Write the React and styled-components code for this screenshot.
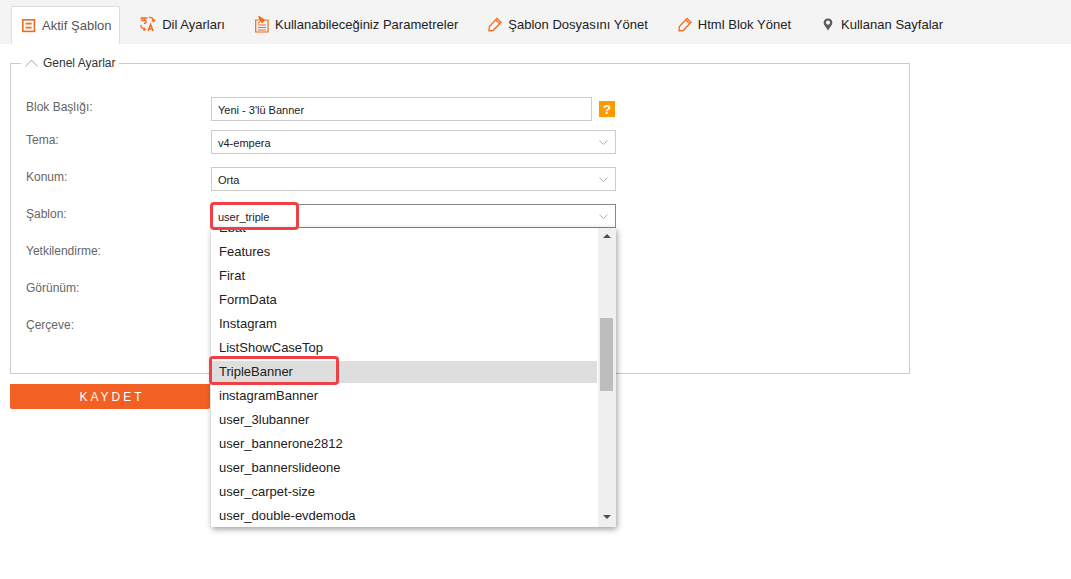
import React from "react";
import styled, { createGlobalStyle } from "styled-components";

const GlobalStyle = createGlobalStyle`
  html, body {
    margin: 0;
    padding: 0;
    background: #fff;
    font-family: "Liberation Sans", Arial, sans-serif;
  }
  * { box-sizing: border-box; }
`;

const Page = styled.div`
  min-height: 579px;
`;

const TabBar = styled.nav`
  display: flex;
  align-items: flex-end;
  height: 44px;
  padding-left: 11px;
  background: #f4f4f4;
`;

const Tab = styled.a`
  display: flex;
  align-items: center;
  gap: 6px;
  height: 38px;
  font-size: 13px;
  letter-spacing: 0.015px;
  white-space: nowrap;
  color: ${(p) => (p.$active ? "#555" : "#222")};
  background: ${(p) => (p.$active ? "#fff" : "transparent")};
  padding: ${(p) => (p.$active ? "0 7.6px 0 10px" : "0 15px 2px")};
  margin-right: ${(p) => (p.$active ? "5px" : "0")};
  border: ${(p) => (p.$active ? "1px solid #ddd" : "1px solid transparent")};
  border-width: ${(p) => (p.$active ? "1px 1px 0 1px" : "0")};
  border-radius: 2px 2px 0 0;
`;

const Fieldset = styled.fieldset`
  width: 900px;
  margin: 12px 0 0 10px;
  padding: 27px 15px 34px;
  border: 1px solid #ccc;
  min-width: 0;
`;

const Legend = styled.legend`
  display: flex;
  align-items: center;
  gap: 5px;
  margin-left: -5px;
  padding: 0 3px 0 4px;
  font-size: 12px;
  line-height: 14px;
  color: #333;
`;

const Row = styled.div`
  display: grid;
  grid-template-columns: 185px 405px;
  margin-bottom: ${(p) => (p.$tight ? "9px" : "13px")};
  &:last-child { margin-bottom: 0; }
`;

const Label = styled.label`
  font-size: 12px;
  line-height: 20px;
  color: #666;
`;

const Control = styled.div`
  position: relative;
  display: flex;
  align-items: center;
  gap: 7px;
`;

const TextInput = styled.input`
  width: 381px;
  height: 24px;
  padding: 1px 6px 0;
  border: 1px solid #ccc;
  font: 11px "Liberation Sans", Arial, sans-serif;
  color: #222;
  outline: none;
`;

const Help = styled.span`
  display: flex;
  align-items: center;
  justify-content: center;
  width: 16px;
  height: 16px;
  background: #ff9900;
  color: #fff;
  font-size: 13px;
  font-weight: bold;
`;

const Select = styled.div`
  display: flex;
  align-items: center;
  justify-content: space-between;
  width: 405px;
  height: 24px;
  padding: 1px 7px 0 6px;
  border: 1px solid ${(p) => (p.$open ? "#888" : "#ccc")};
  font-size: 11px;
  color: #222;
  background: #fff;
`;

const Dropdown = styled.div`
  position: absolute;
  top: 24px;
  left: 0;
  z-index: 2;
  width: 405px;
  height: 299px;
  display: flex;
  justify-content: space-between;
  background: #fff;
  box-shadow: 1px 2px 6px rgba(0, 0, 0, 0.4);
`;

const OptionList = styled.ul`
  width: 386px;
  height: 100%;
  margin: 0;
  padding: 0;
  list-style: none;
  overflow: hidden;
`;

const Option = styled.li`
  height: 22px;
  margin-top: 2px;
  padding-left: 8px;
  font-size: 13px;
  line-height: 21px;
  color: #222;
  background: ${(p) => (p.$selected ? "#dedede" : "transparent")};
  &:first-child { margin-top: -11px; }
`;

const ScrollTrack = styled.div`
  position: relative;
  width: 18px;
  height: 100%;
  background: #f0f0f0;
`;

const ScrollThumb = styled.div`
  position: absolute;
  top: 90px;
  left: 2px;
  width: 13px;
  height: 73px;
  background: #bdbdbd;
`;

const ScrollArrow = styled.span`
  position: absolute;
  left: 5px;
  ${(p) => (p.$down ? "bottom: 8px;" : "top: 6px;")}
  border-left: 4px solid transparent;
  border-right: 4px solid transparent;
  ${(p) => (p.$down ? "border-top: 4px solid #505050;" : "border-bottom: 4px solid #505050;")}
`;

const Highlight = styled.div`
  position: absolute;
  left: ${(p) => p.$left}px;
  top: ${(p) => p.$top}px;
  width: ${(p) => p.$width}px;
  height: ${(p) => p.$height}px;
  border: 3px solid #ef4045;
  border-radius: 4px;
  z-index: 3;
  pointer-events: none;
`;

const SaveButton = styled.button`
  display: block;
  width: 200px;
  height: 25px;
  margin: 10px 0 0 10px;
  padding: 0 0 0 4px;
  border: 0;
  border-radius: 0 0 2px 2px;
  background: #f26024;
  color: #fff;
  font: 12px "Liberation Sans", Arial, sans-serif;
  letter-spacing: 3px;
`;

const orange = "#f26a1b";

const Chevron = ({ up }) => (
  <svg width={up ? 13 : 9} height={up ? 8 : 5} viewBox="0 0 13 8" fill="none" preserveAspectRatio="none">
    <path d={up ? "M0.5 7.5L6.5 1L12.5 7.5" : "M0.5 1L6.5 7L12.5 1"} stroke="#aaa" strokeWidth={up ? 1 : 1.4} />
  </svg>
);

const BlockIcon = () => (
  <svg width="14" height="14" viewBox="0 0 14 14" fill="none" stroke={orange} strokeWidth="1.6">
    <rect x="0.8" y="0.8" width="11.6" height="11.6" />
    <path d="M3.6 4.6H9.6M3.6 8.6H9.6" />
  </svg>
);

const LanguageIcon = () => (
  <svg width="16" height="16" viewBox="0 0 16 16" fill="none" stroke={orange} strokeWidth="1.3">
    <path d="M0.5 2H7.5M2 2V4.5H5.5C6.5 4.5 6.5 7.5 4 7.5M4.5 2V5" />
    <path d="M9 1.5C11.5 1 13.5 2.5 13.5 5M12 3.8L13.5 5.5L15.3 3.8" />
    <path d="M0.8 9C1 11.5 2.5 13 5 13.2M3.6 11.6L5.2 13.2L3.6 14.8" />
    <path d="M8 15L10.6 8.5L13.2 15M9 13H12.2" strokeWidth="1.5" />
  </svg>
);

const ParamIcon = () => (
  <svg width="14" height="17" viewBox="0 0 14 17" fill="none" stroke={orange} strokeWidth="1.2" style={{ marginTop: 1 }}>
    <path d="M4 4H0.7V16H13V4H10" />
    <path d="M3 9H11M3 11.5H11M3 14H11" />
    <path d="M4 0.6L9.5 4.2L7 6.4L4.8 3.6Z M5 5L3 7.5" fill={orange} />
  </svg>
);

const PencilIcon = () => (
  <svg width="14" height="15" viewBox="0 0 14 15" fill="none" stroke={orange} strokeWidth="1.3">
    <path d="M1 13.8L1.4 9.5L9 1.4L13 5.2L5.2 13.5Z" strokeLinejoin="miter" />
    <path d="M7.8 3L11.6 6.6" />
  </svg>
);

const PinIcon = () => (
  <svg width="14" height="13" viewBox="0 0 14 13">
    <path
      fillRule="evenodd"
      fill="#5c5c5c"
      d="M7 0.5C4.4 0.5 2.6 2.3 2.6 4.6C2.6 7 5.6 10 7 12.5C8.4 10 11.4 7 11.4 4.6C11.4 2.3 9.6 0.5 7 0.5ZM7 2.6C8.2 2.6 9.1 3.5 9.1 4.6C9.1 5.8 8.2 6.7 7 6.7C5.8 6.7 4.9 5.8 4.9 4.6C4.9 3.5 5.8 2.6 7 2.6Z"
    />
  </svg>
);

const tabs = [
  { title: "Aktif Şablon", icon: <BlockIcon />, active: true },
  { title: "Dil Ayarları", icon: <LanguageIcon /> },
  { title: "Kullanabileceğiniz Parametreler", icon: <ParamIcon /> },
  { title: "Şablon Dosyasını Yönet", icon: <PencilIcon /> },
  { title: "Html Blok Yönet", icon: <PencilIcon /> },
  { title: "Kullanan Sayfalar", icon: <PinIcon /> },
];

const options = [
  "Ebat",
  "Features",
  "Firat",
  "FormData",
  "Instagram",
  "ListShowCaseTop",
  "TripleBanner",
  "instagramBanner",
  "user_3lubanner",
  "user_bannerone2812",
  "user_bannerslideone",
  "user_carpet-size",
  "user_double-evdemoda",
];

const SelectBox = ({ value, open }) => (
  <Select $open={open}>
    {value}
    <Chevron />
  </Select>
);

const App = () => {
  return (
    <Page>
      <GlobalStyle />
      <TabBar>
        {tabs.map((tab) => (
          <Tab key={tab.title} $active={tab.active}>
            {tab.icon}
            {tab.title}
          </Tab>
        ))}
      </TabBar>

      <Fieldset>
        <Legend>
          <Chevron up />
          Genel Ayarlar
        </Legend>

        <Row $tight>
          <Label>Blok Başlığı:</Label>
          <Control>
            <TextInput value="Yeni - 3'lü Banner" readOnly />
            <Help>?</Help>
          </Control>
        </Row>
        <Row>
          <Label>Tema:</Label>
          <Control>
            <SelectBox value="v4-empera" />
          </Control>
        </Row>
        <Row>
          <Label>Konum:</Label>
          <Control>
            <SelectBox value="Orta" />
          </Control>
        </Row>
        <Row>
          <Label>Şablon:</Label>
          <Control>
            <SelectBox value="user_triple" open />
            <Highlight $left={-1} $top={-2} $width={89} $height={28} />
            <Dropdown>
              <OptionList>
                {options.map((option) => (
                  <Option key={option} $selected={option === "TripleBanner"}>
                    {option}
                  </Option>
                ))}
              </OptionList>
              <ScrollTrack>
                <ScrollArrow />
                <ScrollThumb />
                <ScrollArrow $down />
              </ScrollTrack>
              <Highlight $left={-2} $top={128} $width={130} $height={29} />
            </Dropdown>
          </Control>
        </Row>
        <Row>
          <Label>Yetkilendirme:</Label>
          <Control>
            <SelectBox />
          </Control>
        </Row>
        <Row>
          <Label>Görünüm:</Label>
          <Control>
            <SelectBox />
          </Control>
        </Row>
        <Row>
          <Label>Çerçeve:</Label>
          <Control>
            <SelectBox />
          </Control>
        </Row>
      </Fieldset>

      <SaveButton>KAYDET</SaveButton>
    </Page>
  );
};

export default App;
